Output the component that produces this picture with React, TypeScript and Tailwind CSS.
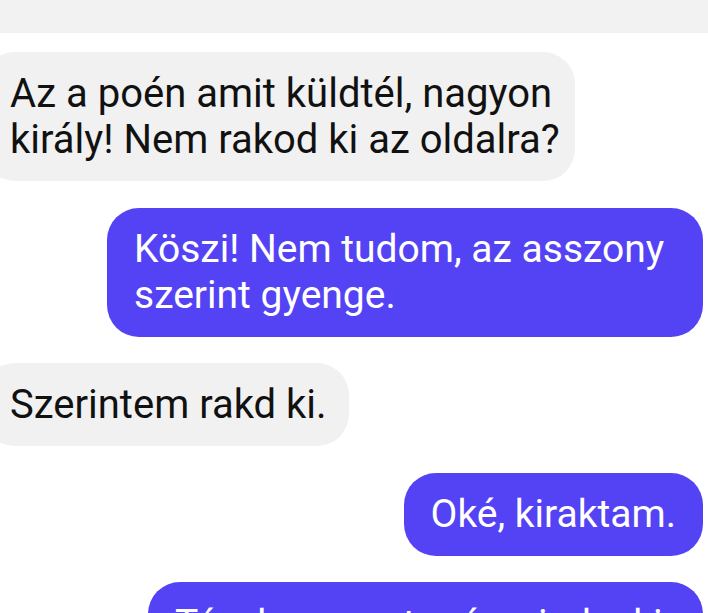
import React from 'react';

const messages = [
  { id: 1, mine: false, lines: ['Az a poén amit küldtél, nagyon', 'király! Nem rakod ki az oldalra?'], width: 'w-[592px]' },
  { id: 2, mine: true, lines: ['Köszi! Nem tudom, az asszony', 'szerint gyenge.'], width: 'w-[596px]' },
  { id: 3, mine: false, lines: ['Szerintem rakd ki.'], width: 'w-fit' },
  { id: 4, mine: true, lines: ['Oké, kiraktam.'], width: 'w-fit' },
  { id: 5, mine: true, lines: ['Tényleg, most már mindenki', 'látja, ki ezt állította.'], width: 'w-[555px]' },
];

const App = () => {
  return (
    <div className="w-[708px] h-[613px] overflow-hidden bg-white font-['Roboto',sans-serif]">
      {/* top bar */}
      <div className="h-[33px] bg-[#f2f2f2]" />

      <div className="flex flex-col gap-[26.5px] pt-[19px] pr-[5px]">
        {messages.map((m) =>
          m.mine ? (
            <div key={m.id} className="flex justify-end">
              <div
                className={`${m.width} rounded-[32px] bg-[#5443f4] px-[27px] py-[18.5px] text-[39px] leading-[46px] text-white whitespace-nowrap`}
              >
                {m.lines.map((line) => (
                  <div key={line}>{line}</div>
                ))}
              </div>
            </div>
          ) : (
            <div key={m.id} className="flex justify-start">
              <div
                className={`${m.width} -ml-[17px] rounded-[32px] bg-[#f1f1f1] py-[18.5px] pl-[27px] pr-[22px] text-[40px] leading-[46px] text-[#111111] whitespace-nowrap`}
              >
                {m.lines.map((line) => (
                  <div key={line}>{line}</div>
                ))}
              </div>
            </div>
          )
        )}
      </div>
    </div>
  );
};

export default App;
